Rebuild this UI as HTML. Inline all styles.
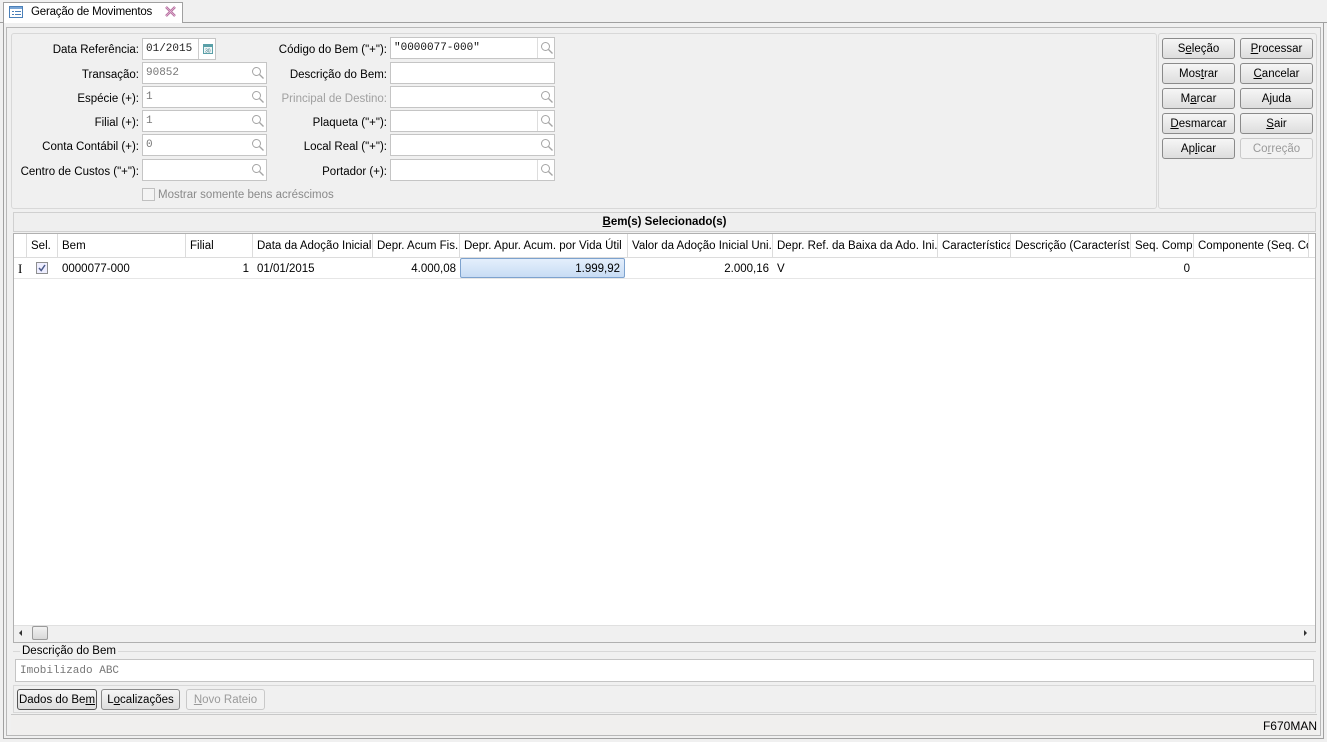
<!DOCTYPE html>
<html><head><meta charset="utf-8">
<style>
*{box-sizing:border-box;margin:0;padding:0}
body{width:1327px;height:742px;background:#f0f0f0;font-family:"Liberation Sans",sans-serif;font-size:12px;color:#000;position:relative;overflow:hidden}
.a{position:absolute}
.lbl{position:absolute;text-align:right;white-space:nowrap;font-size:11.5px}
.in{position:absolute;background:#fff;border:1px solid #c5c5c5;height:22px;font-family:"Liberation Mono",monospace;font-size:11px;color:#777;padding:4px 3px 0;white-space:nowrap}
u{text-decoration:underline}
.btn{position:absolute;height:21px;border:1px solid #8a8a8a;border-radius:3px;background:linear-gradient(#f6f6f6,#dddddd);text-align:center;font-size:11.5px;line-height:21px}
.dis{color:#9a9a9a;border-color:#c9c9c9;background:#f2f2f2}
.ch{position:absolute;top:0;height:23px;border-right:1px solid #dcdcdc;padding:6px 4px 0;white-space:nowrap;overflow:hidden;font-size:11.5px}
.cell{position:absolute;top:0;height:21px;padding:5px 4px 0;white-space:nowrap;overflow:hidden;font-size:11.5px}
</style></head><body>
<div class="a" style="left:0;top:22px;width:1327px;height:1px;background:#a0a0a0"></div>
<div class="a" style="left:3px;top:2px;width:180px;height:21px;background:#fff;border:1px solid #a0a0a0;border-bottom:none"></div>
<svg class="a" style="left:9px;top:6px" width="14" height="12"><rect x=".5" y=".5" width="13" height="11" fill="#fff" stroke="#4a7fb8"/><rect x="1" y="1" width="12" height="2" fill="#7aa6d6"/><line x1="3" y1="5.5" x2="5" y2="5.5" stroke="#4a7fb8"/><line x1="6" y1="5.5" x2="12" y2="5.5" stroke="#4a7fb8"/><line x1="3" y1="8.5" x2="5" y2="8.5" stroke="#4a7fb8"/><line x1="6" y1="8.5" x2="12" y2="8.5" stroke="#4a7fb8"/></svg>
<div class="a" style="left:31px;top:6px;font-size:11.5px;letter-spacing:-0.2px">Geração de Movimentos</div>
<svg class="a" style="left:165px;top:6px" width="11" height="11"><path d="M1 1L10 10M10 1L1 10" stroke="#b06a9a" stroke-width="2.4"/><path d="M1 1L10 10M10 1L1 10" stroke="#e8b8d8" stroke-width=".8"/></svg>
<div class="a" style="left:3px;top:23px;width:1321px;height:716px;border:1px solid #a0a0a0;border-top:none;background:#f0f0f0"></div>
<div class="a" style="left:6px;top:27px;width:1315px;height:709px;border:1px solid #b8b8b8"></div>
<div class="a" style="left:11px;top:33px;width:1146px;height:176px;border:1px solid #d8d8d8;border-radius:3px"></div>
<div class="a" style="left:1158px;top:33px;width:159px;height:176px;border:1px solid #d8d8d8;border-radius:3px"></div>

<div class="lbl" style="right:1188px;top:44px">Data Referência:</div>
<div class="in" style="left:142px;top:38px;width:74px;color:#222">01/2015</div>
<div class="a" style="left:198px;top:39px;height:20px;border-left:1px solid #ccc"></div>
<svg class="a" style="left:203px;top:44px" width="10" height="10"><rect x=".5" y=".5" width="9" height="9" fill="#eef6f6" stroke="#5aa0a8"/><rect x="1" y="1" width="8" height="2" fill="#5aa0a8"/><text x="2" y="8.5" font-size="5" fill="#2d6d7d" font-family="Liberation Sans">30</text></svg>

<div class="lbl" style="right:1188px;top:69px">Transação:</div>
<div class="lbl" style="right:1188px;top:93px">Espécie (+):</div>
<div class="lbl" style="right:1188px;top:117px">Filial (+):</div>
<div class="lbl" style="right:1188px;top:141px">Conta Contábil (+):</div>
<div class="lbl" style="right:1188px;top:166px">Centro de Custos ("+"):</div>
<div class="in" style="left:142px;top:62px;width:125px">90852</div>
<div class="in" style="left:142px;top:86px;width:125px">1</div>
<div class="in" style="left:142px;top:110px;width:125px">1</div>
<div class="in" style="left:142px;top:134px;width:125px">0</div>
<div class="in" style="left:142px;top:159px;width:125px"></div>

<div class="lbl" style="right:940px;top:44px">Código do Bem ("+"):</div>
<div class="lbl" style="right:940px;top:69px">Descrição do Bem:</div>
<div class="lbl" style="right:940px;top:93px;color:#a0a0a0">Principal de Destino:</div>
<div class="lbl" style="right:940px;top:117px">Plaqueta ("+"):</div>
<div class="lbl" style="right:940px;top:141px">Local Real ("+"):</div>
<div class="lbl" style="right:940px;top:166px">Portador (+):</div>
<div class="in" style="left:390px;top:37px;width:165px;color:#111">"0000077-000"</div>
<div class="in" style="left:390px;top:62px;width:165px"></div>
<div class="in" style="left:390px;top:86px;width:165px"></div>
<div class="in" style="left:390px;top:110px;width:165px"></div>
<div class="in" style="left:390px;top:134px;width:165px"></div>
<div class="in" style="left:390px;top:159px;width:165px"></div>
<div class="a" style="left:537px;top:38px;height:20px;border-left:1px solid #ddd"></div>
<div class="a" style="left:537px;top:111px;height:20px;border-left:1px solid #ddd"></div>
<div class="a" style="left:537px;top:160px;height:20px;border-left:1px solid #ddd"></div>

<svg width="0" height="0" style="position:absolute"><defs><g id="mg"><circle cx="5.5" cy="5.5" r="4" fill="none" stroke="#a5a5a5" stroke-width="1"/><path d="M8.5 8.5L12.5 12.5" stroke="#a5a5a5" stroke-width="1.3"/></g></defs></svg>
<svg class="a" style="left:251px;top:66px" width="14" height="14"><use href="#mg"/></svg>
<svg class="a" style="left:251px;top:90px" width="14" height="14"><use href="#mg"/></svg>
<svg class="a" style="left:251px;top:114px" width="14" height="14"><use href="#mg"/></svg>
<svg class="a" style="left:251px;top:138px" width="14" height="14"><use href="#mg"/></svg>
<svg class="a" style="left:251px;top:163px" width="14" height="14"><use href="#mg"/></svg>
<svg class="a" style="left:540px;top:41px" width="14" height="14"><use href="#mg"/></svg>
<svg class="a" style="left:540px;top:90px" width="14" height="14"><use href="#mg"/></svg>
<svg class="a" style="left:540px;top:114px" width="14" height="14"><use href="#mg"/></svg>
<svg class="a" style="left:540px;top:138px" width="14" height="14"><use href="#mg"/></svg>
<svg class="a" style="left:540px;top:163px" width="14" height="14"><use href="#mg"/></svg>

<div class="a" style="left:142px;top:188px;width:13px;height:13px;border:1px solid #c0c0c0;background:#f4f4f4"></div>
<div class="a" style="left:158px;top:189px;color:#8a8a8a;font-size:11.5px">Mostrar somente bens acréscimos</div>

<div class="btn" style="left:1162px;top:38px;width:73px">S<u>e</u>leção</div>
<div class="btn" style="left:1240px;top:38px;width:73px"><u>P</u>rocessar</div>
<div class="btn" style="left:1162px;top:63px;width:73px">Mos<u>t</u>rar</div>
<div class="btn" style="left:1240px;top:63px;width:73px"><u>C</u>ancelar</div>
<div class="btn" style="left:1162px;top:88px;width:73px">M<u>a</u>rcar</div>
<div class="btn" style="left:1240px;top:88px;width:73px">A<u>j</u>uda</div>
<div class="btn" style="left:1162px;top:113px;width:73px"><u>D</u>esmarcar</div>
<div class="btn" style="left:1240px;top:113px;width:73px"><u>S</u>air</div>
<div class="btn" style="left:1162px;top:138px;width:73px">Ap<u>l</u>icar</div>
<div class="btn dis" style="left:1240px;top:138px;width:73px">Co<u>r</u>reção</div>

<div class="a" style="left:13px;top:212px;width:1303px;height:20px;background:#efefef;border:1px solid #d0d0d0;text-align:center;font-weight:bold;font-size:11.5px;line-height:19px"><u>B</u>em(s) Selecionado(s)</div>
<div class="a" style="left:13px;top:233px;width:1303px;height:410px;background:#fff;border:1px solid #b0b0b0"></div>
<div class="a" style="left:14px;top:234px;width:1301px;height:24px;border-bottom:1px solid #dcdcdc">
 <div class="ch" style="left:0;width:13px"></div>
 <div class="ch" style="left:13px;width:31px">Sel.</div>
 <div class="ch" style="left:44px;width:128px">Bem</div>
 <div class="ch" style="left:172px;width:67px">Filial</div>
 <div class="ch" style="left:239px;width:120px">Data da Adoção Inicial</div>
 <div class="ch" style="left:359px;width:87px">Depr. Acum Fis.</div>
 <div class="ch" style="left:446px;width:168px">Depr. Apur. Acum. por Vida Útil</div>
 <div class="ch" style="left:614px;width:145px">Valor da Adoção Inicial Uni.</div>
 <div class="ch" style="left:759px;width:165px">Depr. Ref. da Baixa da Ado. Ini.</div>
 <div class="ch" style="left:924px;width:73px">Característica</div>
 <div class="ch" style="left:997px;width:120px">Descrição (Característica)</div>
 <div class="ch" style="left:1117px;width:63px">Seq. Comp.</div>
 <div class="ch" style="left:1180px;width:115px">Componente (Seq. Comp.)</div>
</div>
<div class="a" style="left:14px;top:258px;width:1301px;height:21px;border-bottom:1px solid #e6e6e6">
 <div class="cell" style="left:2px;width:12px;font-family:'Liberation Serif',serif;font-size:13px;padding:3px 2px">I</div>
 <div class="a" style="left:22px;top:4px;width:12px;height:12px;border:1px solid #8e8f8f;background:#eef"><svg width="10" height="10" style="position:absolute;left:0;top:0"><path d="M2 5L4.2 7.5L8 2" stroke="#4a5a8a" stroke-width="1.5" fill="none"/></svg></div>
 <div class="cell" style="left:44px;width:128px">0000077-000</div>
 <div class="cell" style="left:172px;width:67px;text-align:right">1</div>
 <div class="cell" style="left:239px;width:120px">01/01/2015</div>
 <div class="cell" style="left:359px;width:87px;text-align:right">4.000,08</div>
 <div class="cell" style="left:446px;width:165px;top:0;height:20px;text-align:right;background:linear-gradient(#e4effc,#c8dcf4);border:1px solid #7da2ce;border-radius:2px;padding:4px 4px 0">1.999,92</div>
 <div class="cell" style="left:614px;width:145px;text-align:right">2.000,16</div>
 <div class="cell" style="left:759px;width:165px">V</div>
 <div class="cell" style="left:1117px;width:63px;text-align:right">0</div>
</div>
<div class="a" style="left:14px;top:625px;width:1301px;height:17px;background:#f0f0f0;border-top:1px solid #e0e0e0"></div>
<div class="a" style="left:19px;top:630px;width:0;height:0;border:3px solid transparent;border-right:3px solid #333;border-left:0"></div>
<div class="a" style="left:32px;top:626px;width:16px;height:14px;border:1px solid #9a9a9a;border-radius:2px;background:linear-gradient(#f2f2f2,#d8d8d8)"></div>
<div class="a" style="left:1304px;top:630px;width:0;height:0;border:3px solid transparent;border-left:3px solid #333;border-right:0"></div>

<div class="a" style="left:13px;top:651px;width:1303px;border-top:1px solid #d8d8d8;height:1px"></div>
<div class="a" style="left:20px;top:645px;background:#f0f0f0;padding:0 2px;font-size:11.5px">Descrição do Bem</div>
<div class="in" style="left:15px;top:659px;width:1299px;height:23px;color:#777;padding:5px 4px 0">Imobilizado ABC</div>
<div class="a" style="left:13px;top:685px;width:1303px;height:28px;border:1px solid #d8d8d8"></div>
<div class="btn" style="left:17px;top:689px;width:80px;border-color:#555">Dados do Be<u>m</u></div>
<div class="btn" style="left:101px;top:689px;width:79px">L<u>o</u>calizações</div>
<div class="btn dis" style="left:186px;top:689px;width:79px"><u>N</u>ovo Rateio</div>
<div class="a" style="left:11px;top:714px;width:1306px;height:21px;border-top:1px solid #c8c8c8;background:#f0efee"></div>
<div class="a" style="right:10px;top:719px;font-size:12px">F670MAN</div>
</body></html>
